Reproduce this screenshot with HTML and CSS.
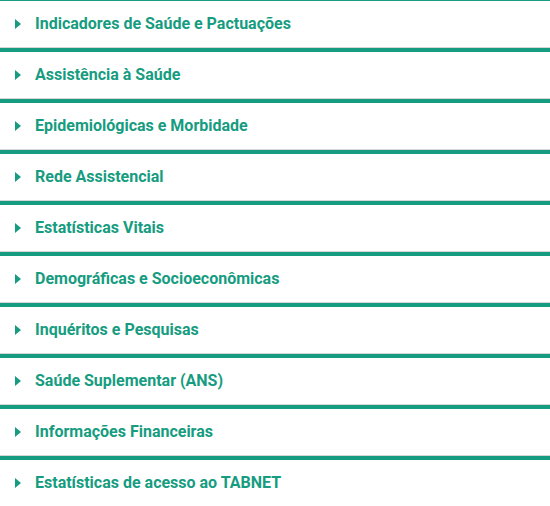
FILE: index.html
```html
<!DOCTYPE html>
<html lang="pt-BR">
<head>
<meta charset="utf-8">
<title>TABNET</title>
<link rel="stylesheet" href="styles.css">
</head>
<body>
<ul class="menu">
  <li class="item"><span class="arrow"></span><span class="label">Indicadores de Saúde e Pactuações</span></li>
  <li class="item"><span class="arrow"></span><span class="label">Assistência à Saúde</span></li>
  <li class="item"><span class="arrow"></span><span class="label">Epidemiológicas e Morbidade</span></li>
  <li class="item"><span class="arrow"></span><span class="label">Rede Assistencial</span></li>
  <li class="item"><span class="arrow"></span><span class="label">Estatísticas Vitais</span></li>
  <li class="item"><span class="arrow"></span><span class="label">Demográficas e Socioeconômicas</span></li>
  <li class="item"><span class="arrow"></span><span class="label">Inquéritos e Pesquisas</span></li>
  <li class="item"><span class="arrow"></span><span class="label">Saúde Suplementar (ANS)</span></li>
  <li class="item"><span class="arrow"></span><span class="label">Informações Financeiras</span></li>
  <li class="item"><span class="arrow"></span><span class="label">Estatísticas de acesso ao TABNET</span></li>
</ul>
</body>
</html>
```
FILE: styles.css
```css
html, body {
  margin: 0;
  padding: 0;
  background: #ffffff;
}
body {
  font-family: Roboto, "Liberation Sans", sans-serif;
}
.menu {
  list-style: none;
  margin: 0;
  padding: 0;
  border-top: 1px solid #169c80;
}
.item {
  display: flex;
  align-items: center;
  height: 46px;
  padding-left: 15px;
  border-bottom: 1px solid #d6d6d6;
  box-shadow: 0 4px 0 #169c80;
  margin-bottom: 4px;
  color: #169c80;
}
.item:last-child {
  border-bottom: none;
  box-shadow: none;
  margin-bottom: 0;
}
.arrow {
  width: 0;
  height: 0;
  border-top: 5px solid transparent;
  border-bottom: 5px solid transparent;
  border-left: 6px solid #169c80;
  margin-right: 14px;
}
.label {
  font-size: 16px;
  font-weight: 700;
  margin-bottom: 2px;
}
```
